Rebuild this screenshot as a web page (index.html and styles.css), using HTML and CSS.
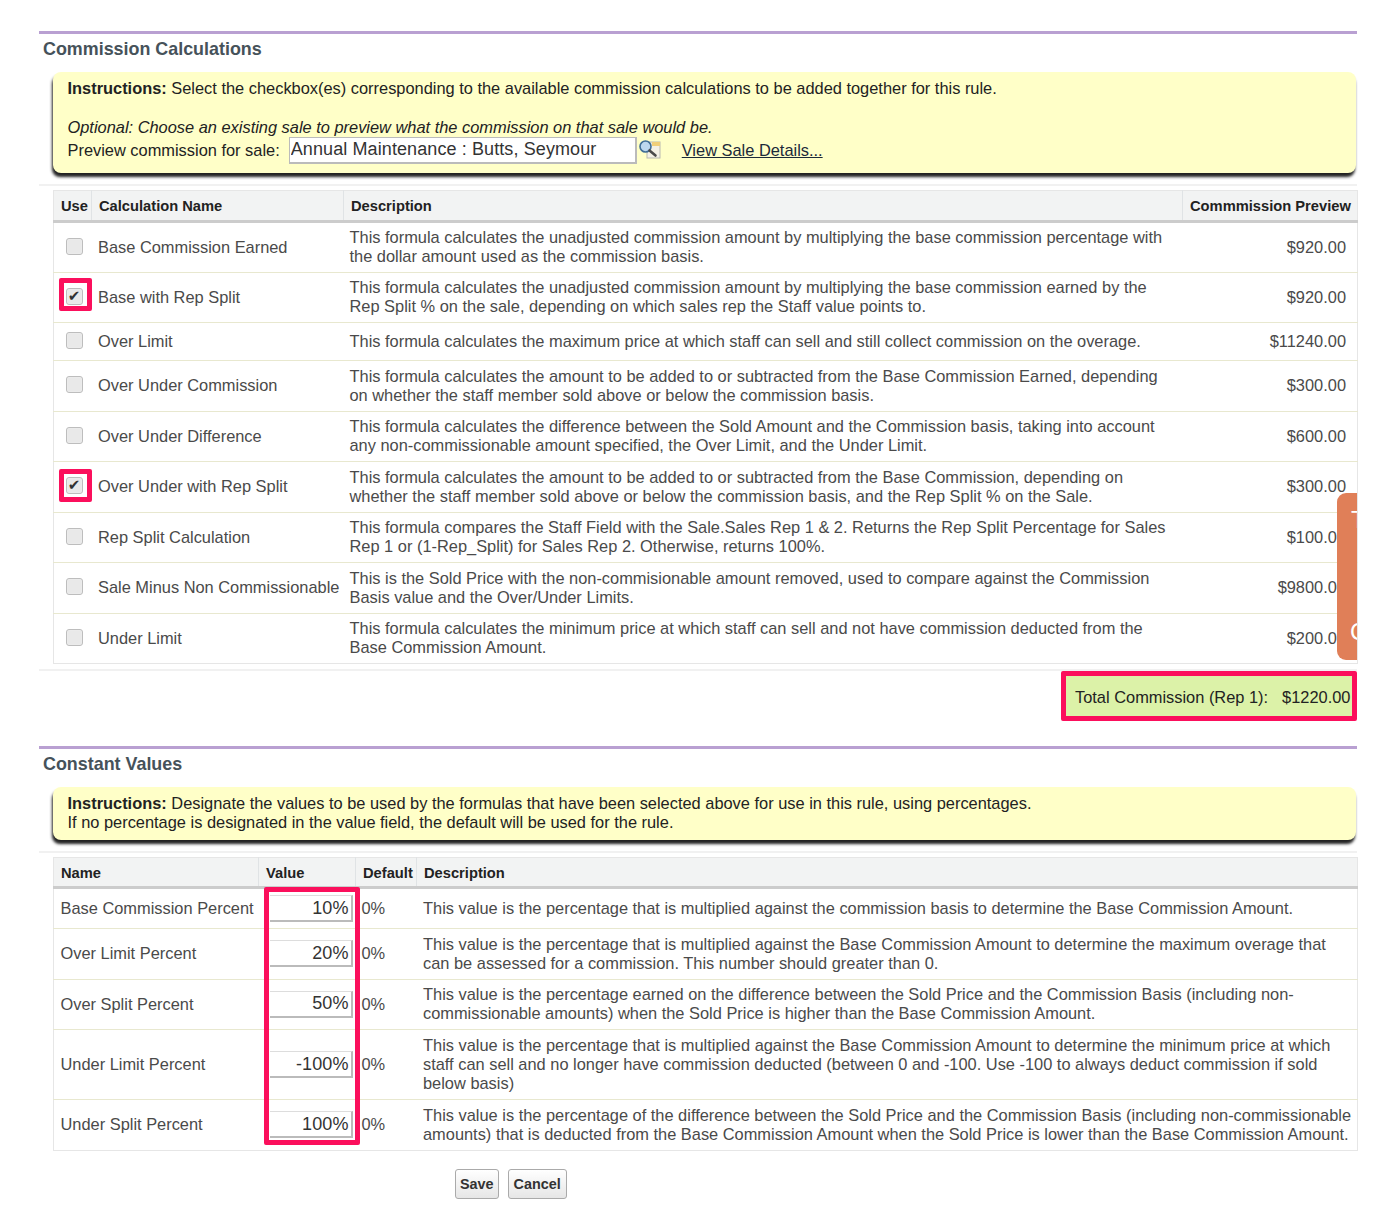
FILE: index.html
```html
<!DOCTYPE html>
<html lang="en">
<head>
<meta charset="utf-8">
<title>Commission Calculations</title>
<link rel="stylesheet" href="styles.css">
</head>
<body>
<main class="page">
  <section class="section">
    <h2 class="section-title">Commission Calculations</h2>
    <div class="note note-first">
      <p class="line"><b>Instructions:</b> Select the checkbox(es) corresponding to the available commission calculations to be added together for this rule.</p>
      <p class="line line-opt"><i>Optional: Choose an existing sale to preview what the commission on that sale would be.</i></p>
      <div class="preview">
        <span>Preview commission for sale:</span>
        <input class="sale-input" type="text" value="Annual Maintenance : Butts, Seymour">
        <svg class="lookup" width="24" height="22" viewBox="0 0 24 22"><rect x="9" y="3" width="13" height="16" fill="#f4f1e6" stroke="#b9b9b0"/><rect x="14" y="3" width="8" height="4" fill="#f0cf7a"/><circle cx="7.5" cy="7.5" r="5.5" fill="#bcd7ee" stroke="#3f6d96" stroke-width="1.6"/><path d="M11.5 11.5l6 5" stroke="#4b4b4b" stroke-width="2.6" stroke-linecap="round"/></svg>
        <a class="details" href="#">View Sale Details...</a>
      </div>
    </div>
    <div class="rule"></div>
    <table class="grid calc">
      <colgroup><col class="c-use"><col class="c-name"><col class="c-desc"><col class="c-prev"></colgroup>
      <thead><tr><th>Use</th><th>Calculation Name</th><th>Description</th><th>Commmission Preview</th></tr></thead>
      <tbody>
        <tr class="h50"><td class="use"><input class="check" type="checkbox"></td><td>Base Commission Earned</td><td>This formula calculates the unadjusted commission amount by multiplying the base commission percentage with<br>the dollar amount used as the commission basis.</td><td class="money">$920.00</td></tr>
        <tr class="h50"><td class="use"><span class="mark"></span><input class="check" type="checkbox" checked></td><td>Base with Rep Split</td><td>This formula calculates the unadjusted commission amount by multiplying the base commission earned by the<br>Rep Split % on the sale, depending on which sales rep the Staff value points to.</td><td class="money">$920.00</td></tr>
        <tr class="h38"><td class="use"><input class="check" type="checkbox"></td><td>Over Limit</td><td>This formula calculates the maximum price at which staff can sell and still collect commission on the overage.</td><td class="money">$11240.00</td></tr>
        <tr class="h50"><td class="use"><input class="check" type="checkbox"></td><td>Over Under Commission</td><td>This formula calculates the amount to be added to or subtracted from the Base Commission Earned, depending<br>on whether the staff member sold above or below the commission basis.</td><td class="money">$300.00</td></tr>
        <tr class="h50"><td class="use"><input class="check" type="checkbox"></td><td>Over Under Difference</td><td>This formula calculates the difference between the Sold Amount and the Commission basis, taking into account<br>any non-commissionable amount specified, the Over Limit, and the Under Limit.</td><td class="money">$600.00</td></tr>
        <tr class="h50"><td class="use"><span class="mark mark-low"></span><input class="check" type="checkbox" checked></td><td>Over Under with Rep Split</td><td>This formula calculates the amount to be added to or subtracted from the Base Commission, depending on<br>whether the staff member sold above or below the commission basis, and the Rep Split % on the Sale.</td><td class="money">$300.00</td></tr>
        <tr class="h50"><td class="use"><input class="check" type="checkbox"></td><td>Rep Split Calculation</td><td>This formula compares the Staff Field with the Sale.Sales Rep 1 &amp; 2. Returns the Rep Split Percentage for Sales<br>Rep 1 or (1-Rep_Split) for Sales Rep 2. Otherwise, returns 100%.</td><td class="money">$100.00</td></tr>
        <tr class="h50"><td class="use"><input class="check" type="checkbox"></td><td>Sale Minus Non Commissionable</td><td>This is the Sold Price with the non-commisionable amount removed, used to compare against the Commission<br>Basis value and the Over/Under Limits.</td><td class="money">$9800.00</td></tr>
        <tr class="h50"><td class="use"><input class="check" type="checkbox"></td><td>Under Limit</td><td>This formula calculates the minimum price at which staff can sell and not have commission deducted from the<br>Base Commission Amount.</td><td class="money">$200.00</td></tr>
      </tbody>
    </table>
    <div class="rule rule-total"></div>
    <div class="total-row">
      <div class="total"><span>Total Commission (Rep 1):</span><span>$1220.00</span></div>
    </div>
    <div class="side-tab"><span class="tab-a">T</span><span class="tab-b">C</span></div>
  </section>

  <section class="section second">
    <h2 class="section-title">Constant Values</h2>
    <div class="note note-second">
      <p class="line"><b>Instructions:</b> Designate the values to be used by the formulas that have been selected above for use in this rule, using percentages.</p>
      <p class="line">If no percentage is designated in the value field, the default will be used for the rule.</p>
    </div>
    <div class="rule"></div>
    <div class="constants">
      <table class="grid const">
        <colgroup><col class="k-name"><col class="k-val"><col class="k-def"><col class="k-desc"></colgroup>
        <thead><tr><th>Name</th><th>Value</th><th class="def">Default</th><th>Description</th></tr></thead>
        <tbody>
          <tr class="h40"><td>Base Commission Percent</td><td class="val"><input class="pct" type="text" value="10%"></td><td class="def">0%</td><td>This value is the percentage that is multiplied against the commission basis to determine the Base Commission Amount.</td></tr>
          <tr class="h50"><td>Over Limit Percent</td><td class="val"><input class="pct" type="text" value="20%"></td><td class="def">0%</td><td>This value is the percentage that is multiplied against the Base Commission Amount to determine the maximum overage that<br>can be assessed for a commission. This number should greater than 0.</td></tr>
          <tr class="h50"><td>Over Split Percent</td><td class="val"><input class="pct" type="text" value="50%"></td><td class="def">0%</td><td>This value is the percentage earned on the difference between the Sold Price and the Commission Basis (including non-<br>commissionable amounts) when the Sold Price is higher than the Base Commission Amount.</td></tr>
          <tr class="h70"><td>Under Limit Percent</td><td class="val"><input class="pct" type="text" value="-100%"></td><td class="def">0%</td><td>This value is the percentage that is multiplied against the Base Commission Amount to determine the minimum price at which<br>staff can sell and no longer have commission deducted (between 0 and -100. Use -100 to always deduct commission if sold<br>below basis)</td></tr>
          <tr class="h50"><td>Under Split Percent</td><td class="val"><input class="pct" type="text" value="100%"></td><td class="def">0%</td><td>This value is the percentage of the difference between the Sold Price and the Commission Basis (including non-commissionable<br>amounts) that is deducted from the Base Commission Amount when the Sold Price is lower than the Base Commission Amount.</td></tr>
        </tbody>
      </table>
      <div class="val-mark"></div>
    </div>
    <div class="actions"><button class="btn" type="button">Save</button><button class="btn" type="button">Cancel</button></div>
  </section>
</main>
</body>
</html>
```
FILE: styles.css
```css
* { box-sizing: border-box; }
html, body { margin: 0; background: #fff; }
body { font-family: "Liberation Sans", Arial, sans-serif; font-size: 16.4px; color: #4a4a4a; overflow: hidden; }
.page { width: 1388px; height: 1214px; padding: 31px 31px 0 39px; }
.section { position: relative; border-top: 3px solid #b9a0d2; }
.second { margin-top: 25px; }
.section-title { margin: 0; padding: 5px 0 0 4px; height: 38px; font-size: 17.9px; line-height: 21px; font-weight: bold; color: #46525a; }
.note { margin: 0 1px 0 14px; background: #ffffc8; border-radius: 8px; padding: 7px 15px 0 14.5px; box-shadow: -1px 4px 3px #222; color: #222; line-height: 19px; }
.note-first { height: 101px; }
.note-second { height: 53px; }
.line { margin: 0; }
.line-opt { margin-top: 20px; }
.preview { display: flex; align-items: center; height: 26px; margin-top: 0; }
.sale-input { width: 348px; height: 27px; margin-left: 9px; padding: 0 1px; border: 1px solid #bbb; border-width: 1px 2px 2px 1px; font: 18px "Liberation Sans", Arial, sans-serif; color: #333; background: #fff; letter-spacing: .1px; }
.lookup { margin-left: 1px; }
.details { margin-left: 20px; color: #1c2a3a; text-decoration: underline; }
.rule { height: 2px; background: #f1f1f1; margin-top: 11px; }
.grid { margin: 4px 0 0 14px; width: 1304px; table-layout: fixed; border-collapse: collapse; background: #fff; border: 1px solid #e6e6e6; }
.calc col.c-use { width: 38px; }
.calc col.c-name { width: 252px; }
.calc col.c-desc { width: 839px; }
.calc col.c-prev { width: 175px; }
.grid th { height: 31px; padding: 0 4px 0 7px; background: #f2f3f3; border-right: 1px solid #e0e3e5; border-bottom: 3px solid #ccc; text-align: left; font-size: 14.7px; color: #222; white-space: nowrap; }
.const th { height: 30px; padding-top: 2px; }
.grid th:last-child { border-right: 0; }
.grid td { padding: 0 5px 0 6.5px; line-height: 19px; border-bottom: 1px solid #e8e8cf; color: #4a4a4a; }
.calc td:nth-child(2) { padding-right: 0; white-space: nowrap; }
.calc td:nth-child(3) { padding-left: 6px; }
.const td:first-child { padding-right: 0; white-space: nowrap; }
.grid tr:last-child td { border-bottom: 0; }
.h38 { height: 38px; }
.h40 { height: 41px; }
.h50 { height: 50.5px; }
.h70 { height: 70px; }
.use { position: relative; padding: 0 !important; text-align: center; }
.check { appearance: none; position: relative; display: inline-block; margin: 0 0 3px 3px; width: 17px; height: 17px; vertical-align: middle; background: #e9e9e9; border: 1px solid #bdbdbd; border-radius: 3px; box-shadow: inset 0 0 1px #fff; }
.check:checked::after { content: "\2714"; position: absolute; left: 1px; top: -1px; font: 15px/16px "DejaVu Sans", sans-serif; color: #333; }
.mark { position: absolute; left: 5px; top: 5px; width: 33px; height: 33px; border: 5px solid #fb0f5c; border-radius: 2px; }
.mark-low { top: 7px; }
.money { text-align: right; padding-right: 11px !important; }
.rule-total { margin-top: 5px; }
.total-row { display: flex; justify-content: flex-end; margin-top: 0; }
.total { display: flex; gap: 14px; align-items: center; width: 296px; height: 50px; padding: 3px 0 0 9px; background: #dcf2a8; border: 5px solid #fb0f5c; border-radius: 2px; color: #222; white-space: nowrap; }
.side-tab { position: absolute; right: 0; top: 459px; width: 20px; height: 167px; background: #e07f58; border-radius: 9px 0 0 9px; color: #fff; font-size: 24px; overflow: hidden; }
.tab-a { position: absolute; left: 14px; top: 13px; }
.tab-b { position: absolute; left: 13px; top: 125px; }
.constants { position: relative; }
.const col.k-name { width: 205px; }
.const col.k-val { width: 97px; }
.const col.k-def { width: 61px; }
.const col.k-desc { width: 941px; }
.grid td.def { padding: 0 0 0 6px; }
.grid th.def { padding-left: 7px; padding-right: 0; }
.grid td.val { padding: 0 7px 0 11px; }
.pct { display: block; width: 83px; height: 27px; margin-left: auto; padding: 0 2px 0 0; border: 1px solid #bbb; border-top-color: #ddd; border-width: 1px 2px 2px 0; text-align: right; font: 18px "Liberation Sans", Arial, sans-serif; color: #333; background: #fff; letter-spacing: .1px; }
.val-mark { position: absolute; left: 225px; top: 30px; width: 96px; height: 258px; border: 5px solid #fb0f5c; border-radius: 2px; pointer-events: none; }
.actions { display: flex; gap: 9px; margin: 18px 0 0 416px; }
.btn { height: 30px; padding: 0 5px; font: bold 14.4px "Liberation Sans", Arial, sans-serif; color: #333; background: linear-gradient(#fff, #e6e6e6); border: 1px solid #aaa; border-radius: 3px; }
.btn:first-child { padding: 0 4px; }
```
